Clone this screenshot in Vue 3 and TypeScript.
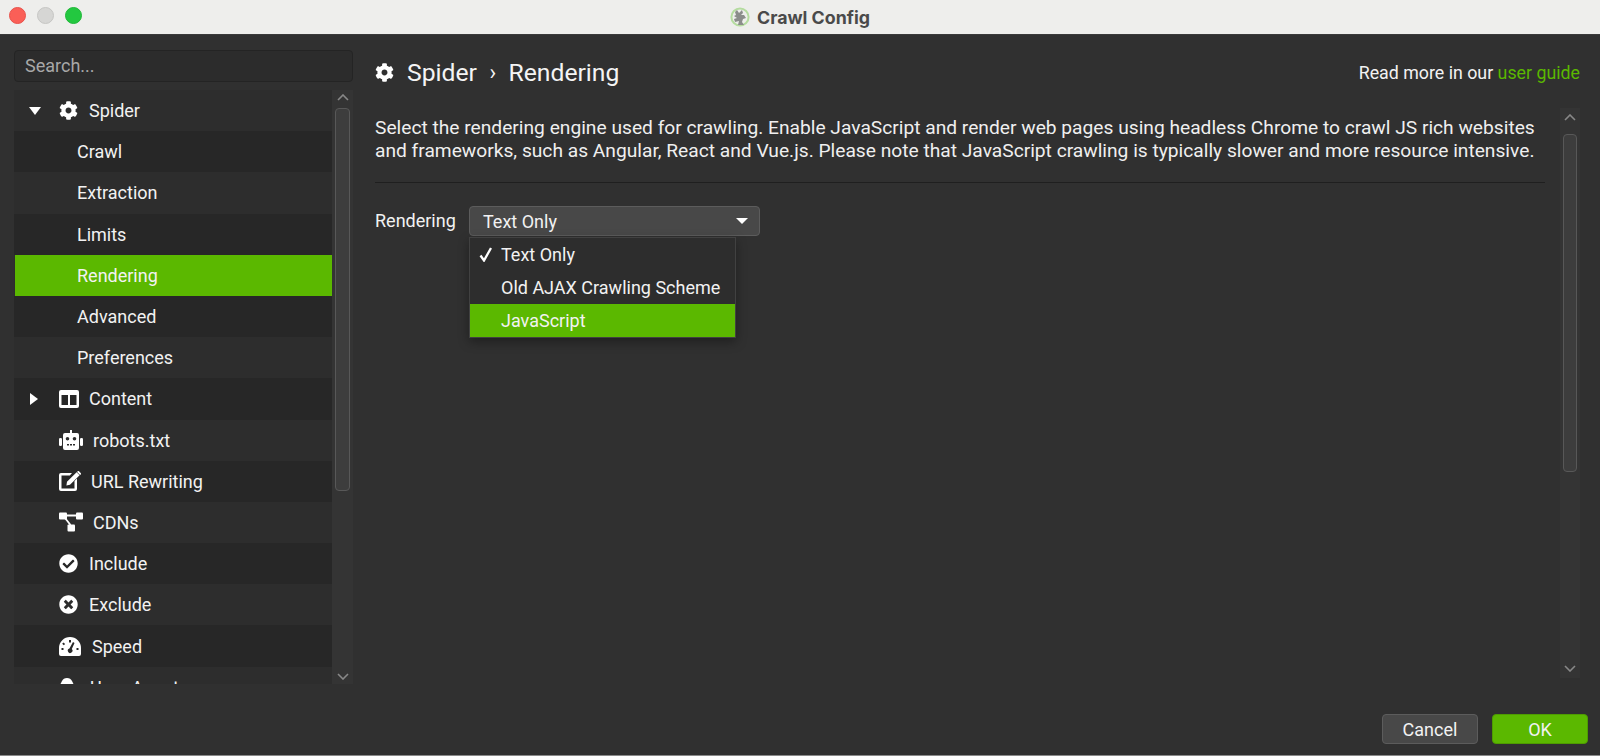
<script setup lang="ts">
interface Row { label: string; icon?: string; arrow?: 'down' | 'right'; sub?: boolean; active?: boolean; gap?: number }
const rows: Row[] = [
  { label: 'Spider', icon: 'cog', arrow: 'down', gap: 11 },
  { label: 'Crawl', sub: true },
  { label: 'Extraction', sub: true },
  { label: 'Limits', sub: true },
  { label: 'Rendering', sub: true, active: true },
  { label: 'Advanced', sub: true },
  { label: 'Preferences', sub: true },
  { label: 'Content', icon: 'columns', arrow: 'right', gap: 10 },
  { label: 'robots.txt', icon: 'robot', gap: 10 },
  { label: 'URL Rewriting', icon: 'edit', gap: 10 },
  { label: 'CDNs', icon: 'diagram', gap: 10 },
  { label: 'Include', icon: 'check', gap: 11 },
  { label: 'Exclude', icon: 'times', gap: 11 },
  { label: 'Speed', icon: 'speed', gap: 11 },
  { label: 'User-Agent', icon: 'user', gap: 11 },
]
const cog = 'M487.4 315.7l-42.6-24.6c4.3-23.2 4.3-47 0-70.2l42.6-24.6c4.9-2.8 7.1-8.6 5.5-14-11.1-35.6-30-67.8-54.7-94.6-3.8-4.1-10-5.1-14.8-2.3L380.8 110c-17.9-15.4-38.5-27.3-60.8-35.1V25.8c0-5.6-3.9-10.5-9.4-11.7-36.7-8.2-74.3-7.8-109.2 0-5.5 1.2-9.4 6.1-9.4 11.7V75c-22.2 7.9-42.8 19.8-60.8 35.1L88.7 85.5c-4.9-2.8-11-1.9-14.8 2.3-24.7 26.7-43.6 58.9-54.7 94.6-1.7 5.4.6 11.2 5.5 14L67.3 221c-4.3 23.2-4.3 47 0 70.2l-42.6 24.6c-4.9 2.8-7.1 8.6-5.5 14 11.1 35.6 30 67.8 54.7 94.6 3.8 4.1 10 5.1 14.8 2.3l42.6-24.6c17.9 15.4 38.5 27.3 60.8 35.1v49.2c0 5.6 3.9 10.5 9.4 11.7 36.7 8.2 74.3 7.8 109.2 0 5.5-1.2 9.4-6.1 9.4-11.7v-49.2c22.2-7.9 42.8-19.8 60.8-35.1l42.6 24.6c4.9 2.8 11 1.9 14.8-2.3 24.7-26.7 43.6-58.9 54.7-94.6 1.5-5.5-.7-11.3-5.6-14.1zM256 336c-44.1 0-80-35.9-80-80s35.9-80 80-80 80 35.9 80 80-35.9 80-80 80z'
</script>

<template>
  <div class="window">
    <header class="titlebar">
      <div class="lights">
        <span class="light red"></span>
        <span class="light grey"></span>
        <span class="light green"></span>
      </div>
      <div class="title">
        <svg class="logo" viewBox="0 0 20 20" width="20" height="20">
          <circle cx="10" cy="10" r="8.6" fill="none" stroke="#b5dca0" stroke-width="2" />
          <path d="M7 3l2 3 3-3 1 3-2 2 3 0 2 3-3 1-1 3 2 3H8l1-4-4 1-1-3 3-1-3-2 2-1-1-3z" fill="#8b8d8b" />
        </svg>
        <span>Crawl Config</span>
      </div>
    </header>

    <div class="body">
      <aside class="side">
        <input class="search" placeholder="Search..." />
        <div class="tree">
          <div class="rows">
            <div
              v-for="r in rows"
              :key="r.label"
              class="row"
              :class="{ active: r.active, sub: r.sub }"
            >
              <template v-if="!r.sub">
                <span class="arrow-slot">
                  <span v-if="r.arrow === 'down'" class="tri-down"></span>
                  <span v-else-if="r.arrow === 'right'" class="tri-right"></span>
                </span>
                <span class="icon-slot" :style="{ marginRight: r.gap + 'px' }">
                  <svg v-if="r.icon === 'cog'" width="19" height="19" viewBox="0 0 512 512"><path :d="cog" fill="#fff" /></svg>
                  <svg v-else-if="r.icon === 'columns'" width="20" height="18" viewBox="0 0 20 18">
                    <path fill-rule="evenodd" fill="#fff" d="M2 0h16a2 2 0 0 1 2 2v14a2 2 0 0 1-2 2H2a2 2 0 0 1-2-2V2a2 2 0 0 1 2-2zM2.500 5v10h6.500V5zM11 5v10h6.500V5z" />
                  </svg>
                  <svg v-else-if="r.icon === 'robot'" width="24" height="20" viewBox="0 0 24 20">
                    <path fill-rule="evenodd" fill="#fff" d="M11 0h2v3h5a2 2 0 0 1 2 2v13a2 2 0 0 1-2 2H6a2 2 0 0 1-2-2V5a2 2 0 0 1 2-2h5zM8.500 7a1.800 1.800 0 1 0 0 3.600 1.800 1.800 0 0 0 0-3.600zM15.500 7a1.800 1.800 0 1 0 0 3.600 1.800 1.800 0 0 0 0-3.600zM8 14v1.600h2V14zM11 14v1.600h2V14zM14 14v1.600h2V14z" />
                    <rect x="0" y="8" width="3" height="8" rx="1.300" fill="#fff" />
                    <rect x="21" y="8" width="3" height="8" rx="1.300" fill="#fff" />
                  </svg>
                  <svg v-else-if="r.icon === 'edit'" width="22" height="20" viewBox="0 0 22 20">
                    <path fill="#fff" d="M2 2h11l-2.200 2.400H2.500v13h13V10l2.500-2.500V18a2 2 0 0 1-2 2H2a2 2 0 0 1-2-2V4a2 2 0 0 1 2-2z" />
                    <path fill="#fff" d="M17.600 1.200l3 3L11 13.800l-3.600.6.600-3.600zM18.600.3a1 1 0 0 1 1.400 0l1.700 1.700a1 1 0 0 1 0 1.400l-.6.600-3-3z" />
                  </svg>
                  <svg v-else-if="r.icon === 'diagram'" width="24" height="20" viewBox="0 0 24 20">
                    <rect x="0" y="0.500" width="8" height="7" rx="1" fill="#fff" />
                    <rect x="17" y="0.500" width="7" height="7" rx="1" fill="#fff" />
                    <rect x="8.500" y="12.500" width="7.500" height="7" rx="1" fill="#fff" />
                    <path d="M7 3.500h11M6 6l5.500 7" stroke="#fff" stroke-width="1.800" fill="none" />
                  </svg>
                  <svg v-else-if="r.icon === 'check'" width="19" height="19" viewBox="0 0 512 512">
                    <path fill="#fff" d="M504 256c0 136.967-111.033 248-248 248S8 392.967 8 256 119.033 8 256 8s248 111.033 248 248zM227.314 387.314l184-184c6.248-6.248 6.248-16.379 0-22.627l-22.627-22.627c-6.248-6.249-16.379-6.249-22.628 0L216 308.118l-70.059-70.059c-6.248-6.248-16.379-6.248-22.628 0l-22.627 22.627c-6.248 6.248-6.248 16.379 0 22.627l104 104c6.249 6.249 16.379 6.249 22.628.001z" />
                  </svg>
                  <svg v-else-if="r.icon === 'times'" width="19" height="19" viewBox="0 0 512 512">
                    <path fill="#fff" d="M256 8C119 8 8 119 8 256s111 248 248 248 248-111 248-248S393 8 256 8zm121.600 313.100c4.700 4.700 4.700 12.300 0 17L338 377.600c-4.700 4.700-12.300 4.700-17 0L256 312l-65.100 65.600c-4.700 4.700-12.300 4.700-17 0L134.400 338c-4.700-4.700-4.700-12.300 0-17l65.600-65-65.600-65.100c-4.700-4.700-4.700-12.300 0-17l39.600-39.600c4.700-4.700 12.300-4.700 17 0l65 65.700 65.100-65.600c4.700-4.700 12.300-4.700 17 0l39.600 39.600c4.700 4.700 4.700 12.300 0 17L312 256l65.600 65.100z" />
                  </svg>
                  <svg v-else-if="r.icon === 'speed'" width="22" height="19" viewBox="0 0 22 19">
                    <path fill-rule="evenodd" fill="#fff" d="M11 0a11 11 0 0 1 11 11v6a2 2 0 0 1-2 2H2a2 2 0 0 1-2-2v-6A11 11 0 0 1 11 0zM10 3v2.500h2V3zM4.500 5.500L3.200 6.800 4.800 8.300 6.100 7zM2.500 11v2h2v-2zM17.500 11v2h2v-2zM14 5l-3.600 6.500a2.300 2.300 0 1 0 2.400.6L15.500 6z" />
                  </svg>
                  <svg v-else-if="r.icon === 'user'" width="20" height="19" viewBox="0 0 20 19">
                    <path fill="#fff" d="M3 3C4 1 5.500 0 8 0s4 1 5 3l1.500 3H17v2H0V6h1.500zM3 9h10a5 5 0 0 1-10 0z" />
                  </svg>
                </span>
              </template>
              <span class="label">{{ r.label }}</span>
            </div>
          </div>
          <div class="vbar">
            <svg class="chev" width="12" height="7" viewBox="0 0 12 7"><path d="M1 6l5-5 5 5" fill="none" stroke="#888" stroke-width="1.600" /></svg>
            <div class="thumb side-thumb"></div>
            <div class="spacer"></div>
            <svg class="chev" width="12" height="7" viewBox="0 0 12 7"><path d="M1 1l5 5 5-5" fill="none" stroke="#888" stroke-width="1.600" /></svg>
          </div>
        </div>
      </aside>

      <main class="main">
        <div class="head">
          <div class="crumb">
            <svg width="19" height="19" viewBox="0 0 512 512"><path :d="cog" fill="#fff" /></svg>
            <span>Spider</span>
            <span class="sep">›</span>
            <span>Rendering</span>
          </div>
          <div class="more">Read more in our <span class="link">user guide</span></div>
        </div>

        <div class="content">
          <div class="panel">
            <p class="desc">Select the rendering engine used for crawling. Enable JavaScript and render web pages using headless Chrome to crawl JS rich websites<br />and frameworks, such as Angular, React and Vue.js. Please note that JavaScript crawling is typically slower and more resource intensive.</p>
            <div class="rule"></div>
            <div class="field">
              <span class="field-label">Rendering</span>
              <div class="combo-wrap">
                <div class="combo">
                  <span>Text Only</span>
                  <span class="tri-down small"></span>
                </div>
                <ul class="menu">
                  <li class="item"><svg class="tick" width="14" height="15" viewBox="0 0 14 15"><path d="M1.500 8.500L5 13.500 12 1" fill="none" stroke="#fff" stroke-width="2.300" /></svg>Text Only</li>
                  <li class="item">Old AJAX Crawling Scheme</li>
                  <li class="item on">JavaScript</li>
                </ul>
              </div>
            </div>
          </div>
          <div class="vbar main-bar">
            <svg class="chev" width="12" height="7" viewBox="0 0 12 7"><path d="M1 6l5-5 5 5" fill="none" stroke="#888" stroke-width="1.600" /></svg>
            <div class="thumb main-thumb"></div>
            <div class="spacer"></div>
            <svg class="chev" width="12" height="7" viewBox="0 0 12 7"><path d="M1 1l5 5 5-5" fill="none" stroke="#888" stroke-width="1.600" /></svg>
          </div>
        </div>
      </main>
    </div>

    <footer class="foot">
      <button class="btn">Cancel</button>
      <button class="btn ok">OK</button>
    </footer>
  </div>
</template>

<style>
html, body { margin: 0; background: #303030; }
</style>

<style scoped>
.window {
  width: 1600px;
  height: 756px;
  display: flex;
  flex-direction: column;
  overflow: hidden;
  background: #303030;
  color: #f2f2f2;
  font-family: Roboto, "Liberation Sans", sans-serif;
  font-size: 18px;
  box-sizing: border-box;
  border-bottom: 1px solid #8a8a8a;
}
.titlebar {
  height: 34px;
  flex: none;
  position: relative;
  display: flex;
  align-items: center;
  justify-content: center;
  background: #eeeeec;
  border-bottom: 1px solid #3a3a3a;
}
.lights {
  position: absolute;
  left: 9px;
  top: 7px;
  display: flex;
  gap: 11px;
}
.light { width: 17px; height: 17px; border-radius: 50%; box-sizing: border-box; }
.red { background: #fa5f57; border: 1px solid #e8524b; }
.grey { background: #d6d6d4; border: 1px solid #c6c6c4; }
.green { background: #23c840; border: 1px solid #1fb838; }
.title {
  display: flex;
  align-items: center;
  gap: 7px;
  color: #4a4a4a;
  font-family: Inter, "Liberation Sans", sans-serif;
  font-weight: 700;
  font-size: 17.8px;
}
.body { flex: 1; min-height: 0; display: flex; }
.side {
  width: 352px;
  margin-left: 14px;
  flex: none;
  display: flex;
  flex-direction: column;
  padding-top: 15px;
}
.search {
  height: 32px;
  box-sizing: border-box;
  background: #2c2c2c;
  border: 1px solid #242424;
  border-radius: 4px;
  padding: 0 10px 2px;
  color: #f2f2f2;
  font: inherit;
  outline: none;
  width: 339px;
  margin-bottom: 8px;
}
.search::placeholder { color: #a8a8a8; opacity: 1; }
.tree { width: 339px; height: 594px; display: flex; background: #2d2d2d; }
.rows { flex: 1; min-width: 0; overflow: hidden; }
.row {
  height: 41.2px;
  display: flex;
  align-items: center;
  padding-left: 14px;
  box-sizing: border-box;
  white-space: nowrap;
}
.row:nth-child(even) { background: #272727; }
.row:nth-child(odd) { background: #2d2d2d; }
.row.sub { padding-left: 63px; }
.row.active { background: #5bb800; border-left: 1px solid #2d2d2d; padding-left: 62px; }
.arrow-slot { width: 45px; flex: none; display: flex; align-items: center; padding-left: 14px; box-sizing: border-box; margin-left: -14px; }
.icon-slot { display: flex; align-items: center; flex: none; }
.tri-down {
  width: 0; height: 0;
  border-left: 6.500px solid transparent;
  border-right: 6.500px solid transparent;
  border-top: 8px solid #fff;
  margin-left: 1px;
}
.tri-right {
  width: 0; height: 0;
  border-top: 6px solid transparent;
  border-bottom: 6px solid transparent;
  border-left: 8px solid #fff;
  margin-left: 2px;
}
.vbar {
  width: 21px;
  flex: none;
  display: flex;
  flex-direction: column;
  align-items: center;
  background: #343434;
}
.chev { flex: none; margin: 4px 0 4px; }
.thumb {
  width: 15px;
  box-sizing: border-box;
  border: 1.500px solid #585858;
  border-radius: 4px;
  background: #3d3d3d;
  flex: none;
}
.side-thumb { height: 383px; margin-top: 3px; }
.spacer { flex: 1; }
.main { flex: 1; min-width: 0; display: flex; flex-direction: column; padding: 0 20px 0 9px; }
.head { height: 73px; flex: none; display: flex; justify-content: space-between; align-items: center; padding-top: 2px; box-sizing: border-box; }
.crumb { display: flex; align-items: center; font-size: 24.7px; color: #f4f4f4; }
.crumb svg { margin-right: 13px; }
.sep { margin: 0 12.500px; font-size: 22px; }
.more { font-size: 17.8px; }
.link { color: #5bb800; }
.content { display: flex; gap: 15px; height: 570px; flex: none; }
.panel { flex: 1; min-width: 0; }
.desc { margin: 8px 0 0; font-size: 19.2px; line-height: 23px; color: #efefef; white-space: nowrap; }
.rule { height: 1px; background: #1f1f1f; margin: 20px 0 23px; }
.field { display: flex; align-items: flex-start; }
.field-label { width: 94px; flex: none; line-height: 30px; }
.combo-wrap { position: relative; width: 291px; }
.combo {
  height: 30px;
  box-sizing: border-box;
  background: #484848;
  border: 1.500px solid #5c5c5c;
  border-radius: 4px;
  display: flex;
  align-items: center;
  justify-content: space-between;
  padding: 0 11px 0 13px;
}
.tri-down.small { border-top-width: 6.500px; margin-left: 0; }
.menu {
  position: absolute;
  top: 31px;
  left: 0;
  width: 267px;
  margin: 0;
  padding: 0;
  list-style: none;
  box-sizing: border-box;
  background: #2d2d2d;
  border: 1px solid #414141;
  box-shadow: 0 4px 10px rgba(0, 0, 0, 0.35);
}
.item {
  height: 33px;
  display: flex;
  align-items: center;
  padding-left: 31px;
  position: relative;
}
.item.on { background: #5bb800; }
.tick { position: absolute; left: 9px; top: 9px; }
.main-bar { width: 20px; }
.main-bar .chev { margin: 6px 0 6px; }
.main-thumb { height: 338px; width: 14px; margin-top: 7px; }
.foot {
  height: 30px;
  flex: none;
  display: flex;
  justify-content: flex-end;
  gap: 14px;
  padding: 0 12px 11px 0;
}
.btn {
  width: 96px;
  height: 30px;
  box-sizing: border-box;
  border-radius: 4px;
  background: #484848;
  border: 1.500px solid #5c5c5c;
  color: #f2f2f2;
  font: inherit;
  padding: 0;
}
.btn.ok { background: #5bb800; border-color: #4e9c00; }
</style>
